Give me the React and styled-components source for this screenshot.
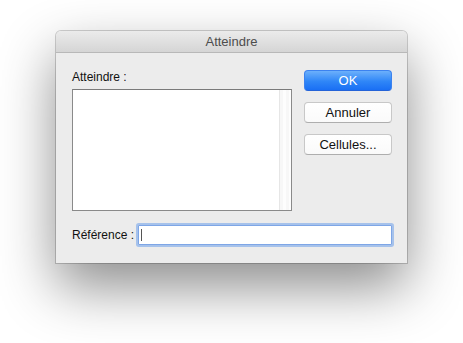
import React from "react";
import styled, { createGlobalStyle } from "styled-components";

const Global = createGlobalStyle`
  html, body { margin: 0; padding: 0; background: #ffffff; }
  body { font-family: "Liberation Sans", Arial, sans-serif; }
`;

const Stage = styled.div`
  width: 463px;
  height: 343px;
  padding: 31px 0 0 56px;
  box-sizing: border-box;
  overflow: hidden;
`;

const Window = styled.div`
  width: 351px;
  height: 232px;
  box-sizing: border-box;
  background: #ececec;
  border-radius: 5px 5px 0 0;
  box-shadow: 0 0 0 1px rgba(0, 0, 0, 0.18), 0 24px 55px rgba(0, 0, 0, 0.45);
  display: flex;
  flex-direction: column;
`;

const TitleBar = styled.div`
  height: 21px;
  flex: none;
  border-radius: 5px 5px 0 0;
  background: linear-gradient(#ebebeb, #d5d5d5);
  border-bottom: 1px solid #b8b8b8;
  display: flex;
  align-items: center;
  justify-content: center;
  font-size: 13px;
  color: #4d4d4d;
`;

const Body = styled.div`
  flex: 1;
  padding: 16px 15px 0 16px;
  display: flex;
  flex-direction: column;
`;

const TopArea = styled.div`
  display: flex;
  gap: 12px;
`;

const LeftCol = styled.div`
  display: flex;
  flex-direction: column;
  width: 220px;
`;

const Label = styled.div`
  font-size: 12px;
  line-height: 14px;
  color: #111111;
  white-space: nowrap;
  margin-top: ${(p) => p.$mt || 0}px;
`;

const ListBox = styled.div`
  margin-top: 5px;
  height: 122px;
  box-sizing: border-box;
  background: #ffffff;
  border: 1px solid #8a8a8a;
  border-top-color: #7a7a7a;
  display: flex;
  justify-content: flex-end;
`;

const Track = styled.div`
  width: 11px;
  background: repeating-linear-gradient(90deg, #f7f7f7 0 3px, #fdfdfd 3px 6px);
  border-left: 1px solid #e6e6e6;
`;

const RightCol = styled.div`
  display: flex;
  flex-direction: column;
  gap: 11px;
  padding-top: 1px;
`;

const Button = styled.div`
  width: 88px;
  height: 21px;
  box-sizing: border-box;
  border-radius: 4px;
  display: flex;
  align-items: center;
  justify-content: center;
  font-size: 13px;
  color: ${(p) => (p.$primary ? "#ffffff" : "#111111")};
  background: ${(p) =>
    p.$primary
      ? "linear-gradient(#6cb0fb, #2f86f7 55%, #1a6ff4)"
      : "linear-gradient(#ffffff, #fafafa)"};
  border: 1px solid ${(p) => (p.$primary ? "#3c82ef" : "#c8c8c8")};
  border-bottom-color: ${(p) => (p.$primary ? "#2463d8" : "#aeaeae")};
`;

const RefRow = styled.div`
  margin-top: 14px;
  display: flex;
  align-items: center;
  gap: 4px;
`;

const Field = styled.div`
  flex: 1;
  height: 20px;
  box-sizing: border-box;
  background: #ffffff;
  border: 1px solid #7ea6e6;
  box-shadow: 0 0 0 2px rgba(110, 160, 235, 0.55);
  border-radius: 1px;
  display: flex;
  align-items: center;
  padding-left: 2px;
`;

const Caret = styled.span`
  width: 1px;
  height: 12px;
  background: #555555;
`;

export default function App() {
  return (
    <>
      <Global />
      <Stage>
        <Window>
          <TitleBar>Atteindre</TitleBar>
          <Body>
            <TopArea>
              <LeftCol>
                <Label $mt={1}>Atteindre :</Label>
                <ListBox>
                  <Track />
                </ListBox>
              </LeftCol>
              <RightCol>
                <Button $primary>OK</Button>
                <Button>Annuler</Button>
                <Button>Cellules...</Button>
              </RightCol>
            </TopArea>
            <RefRow>
              <Label>Référence :</Label>
              <Field>
                <Caret />
              </Field>
            </RefRow>
          </Body>
        </Window>
      </Stage>
    </>
  );
}
